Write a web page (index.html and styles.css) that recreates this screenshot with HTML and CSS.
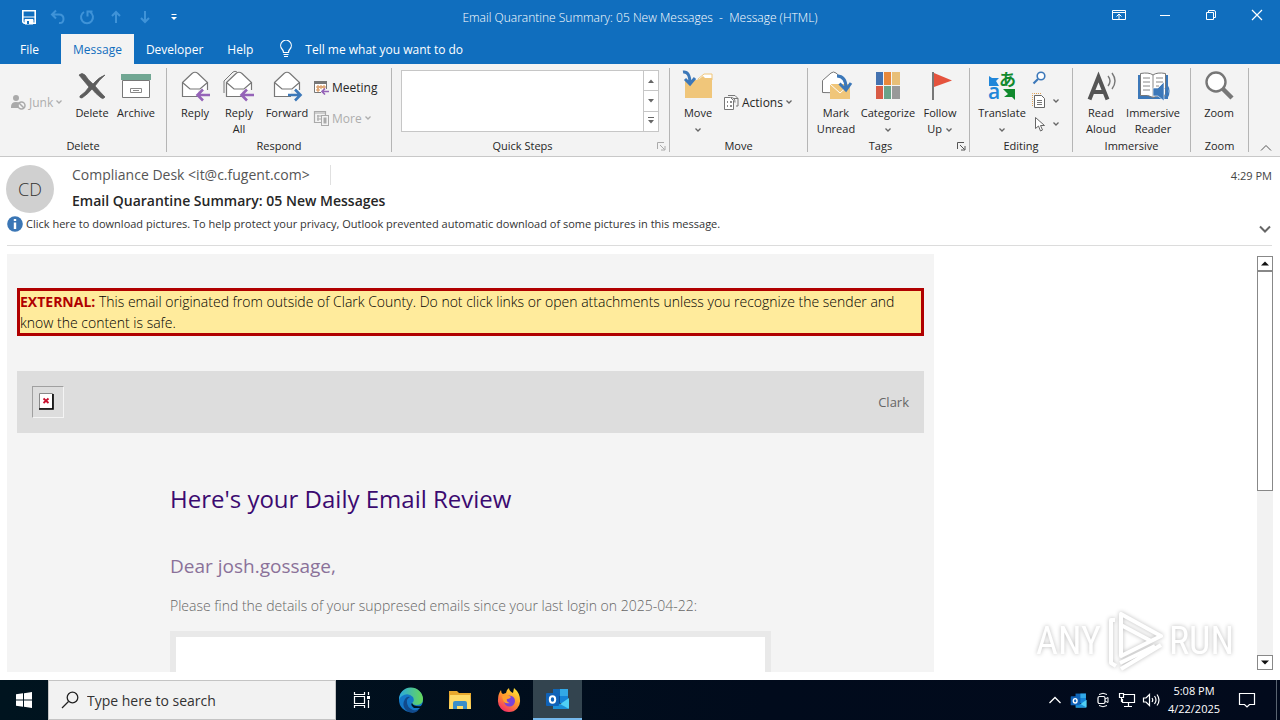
FILE: index.html
```html
<!DOCTYPE html>
<html lang="en">
<head>
  <meta charset="UTF-8" />
  <meta name="viewport" content="width=device-width, initial-scale=1.0" />
  <title>Email Quarantine Summary: 05 New Messages - Message (HTML)</title>
  <link rel="stylesheet" href="styles.css">
</head>
<body>
  <svg class="sprite" aria-hidden="true">
    <symbol id="caret" viewBox="0 0 8 6"><path d="M1.500 1.500L4 4l2.500-2.500" fill="none" stroke="currentColor" stroke-width="1.300"/></symbol>
    <symbol id="envelope" viewBox="0 0 32 32">
      <path d="M3.500 12.500L13 3.500q3-2.500 6 0l9.500 9v14h-25z" fill="#fff" stroke="#777" stroke-width="1.200"/>
      <path d="M3.500 12.500L11 19h10l7.500-6.500" fill="none" stroke="#777" stroke-width="1.200"/>
    </symbol>
    <symbol id="back-arrow" viewBox="0 0 16 14"><path d="M15.500 7H3M8.500 1.500L3 7l5.500 5.500" fill="none" stroke="currentColor" stroke-width="2.600"/></symbol>
    <symbol id="launcher" viewBox="0 0 9 9"><path d="M.5 7V.5H7M3 3l4.500 4.500M8 4v4H4" fill="none" stroke="currentColor"/></symbol>
    <symbol id="outlook" viewBox="0 0 26 24">
      <path d="M8 2h15v14H8z" fill="#1066b5"/>
      <path d="M15 2h8v7h-8z" fill="#32a9e7"/><path d="M8 9h7v7H8z" fill="#0a4c94"/><path d="M15 9h8v7h-8z" fill="#1483d8"/>
      <path d="M8 22l16-11v10q0 1-1 1z" fill="#50d0f5"/><path d="M8 13l16 9H8z" fill="#1b90d8"/>
      <rect x="1" y="6" width="13" height="13" rx="1" fill="#0f62b8"/>
      <ellipse cx="7.500" cy="12.500" rx="2.700" ry="3.200" fill="none" stroke="#fff" stroke-width="2"/>
    </symbol>
  </svg>

  <header class="titlebar">
    <div class="quick-access">
      <button aria-label="Save"><svg width="16" height="16" viewBox="0 0 16 16"><path d="M1.800 1.800h12.400v12.400H3.200l-1.400-1.400z" fill="none" stroke="#fff" stroke-width="1.600"/><path d="M2 8h12M4 10.500h8V15H4z" fill="#fff" stroke="#fff"/><path d="M6 12h2v3H6z" fill="#106ebe"/></svg></button>
      <button class="faded" aria-label="Undo"><svg width="16" height="16" viewBox="0 0 16 16"><path d="M6 1.500L2 5.500l4 4M2 5.500h7q4.500 0 4.500 4.500T9 14" fill="none" stroke="currentColor" stroke-width="2"/></svg></button>
      <button class="faded" aria-label="Redo"><svg width="16" height="16" viewBox="0 0 16 16"><path d="M5 3a6 6 0 1 0 6 0M8.500 7.500V2.500h5" fill="none" stroke="currentColor" stroke-width="2"/></svg></button>
      <button class="faded" aria-label="Previous item"><svg width="16" height="16" viewBox="0 0 16 16"><path d="M8 14V3M4 7l4-4 4 4" fill="none" stroke="currentColor" stroke-width="2"/></svg></button>
      <button class="faded" aria-label="Next item"><svg width="16" height="16" viewBox="0 0 16 16"><path d="M8 2v11M4 9l4 4 4-4" fill="none" stroke="currentColor" stroke-width="2"/></svg></button>
      <button aria-label="Customize"><svg width="16" height="16" viewBox="0 0 16 16"><path d="M5.500 5.500h5" stroke="#fff"/><path d="M5 8h6l-3 3z" fill="#fff"/></svg></button>
    </div>
    <div class="window-title">Email Quarantine Summary: 05 New Messages&nbsp; -&nbsp; Message (HTML)</div>
    <div class="window-buttons">
      <button aria-label="Ribbon display options"><svg width="14" height="12" viewBox="0 0 14 12"><path d="M.5 1.500h13v9H.5zM.5 3.500h13M7 10V5M4.500 7.500L7 5l2.500 2.500" fill="none" stroke="#fff"/></svg></button>
      <button aria-label="Minimize"><svg width="12" height="12" viewBox="0 0 12 12"><path d="M1 6.500h10" stroke="#fff"/></svg></button>
      <button aria-label="Restore"><svg width="12" height="12" viewBox="0 0 12 12"><path d="M1.500 3.500h7v7h-7zM3.500 3V1.500H9q1.500 0 1.500 1.500v5.500H9" fill="none" stroke="#fff"/></svg></button>
      <button aria-label="Close"><svg width="12" height="12" viewBox="0 0 12 12"><path d="M1 1l10 10M11 1L1 11" stroke="#fff" stroke-width="1.200"/></svg></button>
    </div>
  </header>

  <nav class="tabs">
    <button class="tab">File</button>
    <button class="tab active">Message</button>
    <button class="tab">Developer</button>
    <button class="tab">Help</button>
    <button class="tell-me"><svg width="14" height="18" viewBox="0 0 14 18"><path d="M4.500 12.500q0-2-1.500-3.500a5.300 5.300 0 1 1 8 0q-1.500 1.500-1.500 3.500zM4.500 14.500h5M5 16.500h4" fill="none" stroke="#fff" stroke-width="1.200"/></svg>Tell me what you want to do</button>
  </nav>

  <section class="ribbon">
    <div class="group">
      <div class="group-main">
        <div class="stack junk">
          <button class="small disabled"><svg width="17" height="16" viewBox="0 0 17 16"><circle cx="6" cy="4" r="3" fill="#aaa"/><path d="M1 13q0-5 5-5 3 0 4 1l-2 5H1z" fill="#aaa"/><circle cx="11.500" cy="11.500" r="3.500" fill="#f3f3f3" stroke="#aaa" stroke-width="1.500"/><path d="M9 9l5 5" stroke="#aaa" stroke-width="1.500"/></svg>Junk<svg class="caret"><use href="#caret"/></svg></button>
        </div>
        <button class="big"><svg class="icon" viewBox="0 0 32 32"><path d="M3 5q3-3 6 0 3 5 8 9 6-7 12-9-6 5-10 11 5 6 10 11-2 3-5 0-5-4-8-8-4 5-10 9-3 0-2-2 6-4 9-9-5-6-10-12z" fill="#5d5d5d" stroke="#5d5d5d" stroke-width=".8"/></svg><span>Delete</span></button>
        <button class="big"><svg class="icon" viewBox="0 0 32 32"><path d="M1 4h30v6H1z" fill="#71a793"/><path d="M2.500 10.500h27v17h-27z" fill="#fff" stroke="#777"/><path d="M10.500 18.500h11v4h-11zM13 20.500h6" fill="none" stroke="#888"/></svg><span>Archive</span></button>
      </div>
      <div class="group-name">Delete</div>
    </div>

    <div class="group">
      <div class="group-main">
        <button class="big"><svg class="icon" viewBox="0 0 32 32"><use href="#envelope"/><path d="M19 20h12v10H19z" fill="#f3f3f3"/><svg x="15" y="18" width="17" height="14" color="#9563b8"><use href="#back-arrow"/></svg></svg><span>Reply</span></button>
        <button class="big"><svg class="icon" viewBox="0 0 32 32"><path d="M1 23V11L10 2q2-1.500 4 0" fill="none" stroke="#777"/><use href="#envelope"/><path d="M19 20h12v10H19z" fill="#f3f3f3"/><svg x="15" y="18" width="17" height="14" color="#9563b8"><use href="#back-arrow"/></svg></svg><span>Reply<br>All</span></button>
        <button class="big mid"><svg class="icon" viewBox="0 0 32 32"><use href="#envelope"/><path d="M20 20h11v10H20z" fill="#f3f3f3"/><path d="M17 25h12M24 19.500l5.500 5.500-5.500 5.500" fill="none" stroke="#3c78b9" stroke-width="2.600"/></svg><span>Forward</span></button>
        <div class="stack respond-more">
          <button class="small"><svg width="17" height="16" viewBox="0 0 17 16"><path d="M1.500 2.500h12v11h-12z" fill="#fff" stroke="#777"/><path d="M1 2h13v3H1z" fill="#777"/><path d="M4 7h2v2H4zM7 7h2v2H7zM10 7h2v2h-2zM4 10h2v2H4z" fill="#fff" stroke="#d58a4a"/><path d="M8 10h7v5H8z" fill="#f3f3f3"/><path d="M16 12.500H9M12 9.500l-3 3 3 3" fill="none" stroke="#9563b8" stroke-width="1.600"/></svg>Meeting</button>
          <button class="small disabled"><svg width="17" height="16" viewBox="0 0 17 16"><path d="M1.500 1.500h11v11h-11zM1 3h12M4 6h6M4 9h5M5 5v6" fill="none" stroke="#aaa" stroke-width="1.200"/><rect x="8.500" y="5.500" width="7" height="10" fill="#f3f3f3" stroke="#aaa"/><path d="M10.500 7.500h3v6h-3z" fill="#aaa"/></svg>More<svg class="caret"><use href="#caret"/></svg></button>
        </div>
      </div>
      <div class="group-name">Respond</div>
    </div>

    <div class="group">
      <div class="group-main quick-steps">
        <div class="steps-list"></div>
        <div class="steps-scroll">
          <button aria-label="Row up"><svg width="8" height="6" viewBox="0 0 8 6"><path d="M1 5l3-3.500L7 5z" fill="#666"/></svg></button>
          <button aria-label="Row down"><svg width="8" height="6" viewBox="0 0 8 6"><path d="M1 1l3 3.500L7 1z" fill="#666"/></svg></button>
          <button aria-label="More steps"><svg width="8" height="8" viewBox="0 0 8 8"><path d="M1 .5h6" stroke="#666"/><path d="M1 3l3 3.500L7 3z" fill="#666"/></svg></button>
        </div>
      </div>
      <div class="group-name with-launcher">Quick Steps<button class="launcher faint" aria-label="Manage quick steps"><svg width="9" height="9"><use href="#launcher"/></svg></button></div>
    </div>

    <div class="group">
      <div class="group-main">
        <button class="big"><svg class="icon" viewBox="0 0 32 32"><path d="M16 9l6-5h8v6H16z" fill="#fff" stroke="#f0c67a"/><path d="M3 10h13l5-4 2 2h7v20H3z" fill="#f0c67a"/><path d="M1 2q7-1 7 12M3 9l5 5 5-6" fill="none" stroke="#3c78b9" stroke-width="3"/></svg><span>Move<br><svg class="caret"><use href="#caret"/></svg></span></button>
        <div class="stack one">
          <button class="small"><svg width="17" height="16" viewBox="0 0 17 16"><path d="M1.500 3.500h6l3 3v9h-9z" fill="#fff" stroke="#777"/><path d="M4 8h1M7 8h2M4 12h1M7 12h2" stroke="#666" stroke-width="1.600"/><path d="M5 1.500h7l3 3V12h-2M11 4.500h4M8 3.500q4 0 4 5" fill="none" stroke="#777"/></svg>Actions<svg class="caret"><use href="#caret"/></svg></button>
        </div>
      </div>
      <div class="group-name">Move</div>
    </div>

    <div class="group">
      <div class="group-main">
        <button class="big"><svg class="icon" viewBox="0 0 32 32"><path d="M2.500 22.500v-12L11 3q2.500-2 5 0l9 8v12z" fill="#fff" stroke="#777"/><path d="M10 14h20v15H10z" fill="#f0c67a"/><path d="M10 14l10 9 10-9" fill="none" stroke="#fff"/><path d="M17 6q9 0 9 12M19.500 13.500L26 20l5-7" fill="none" stroke="#3c78b9" stroke-width="3"/></svg><span>Mark<br>Unread</span></button>
        <button class="big wide"><svg class="icon" viewBox="0 0 32 32"><path d="M4 2h7v13H4z" fill="#4472b0"/><path d="M12 2h7v13h-7z" fill="#e8883a"/><path d="M20 2h8v13h-8z" fill="#e8bf78"/><path d="M4 16h7v13H4z" fill="#d85b45"/><path d="M12 16h7v13h-7z" fill="#6aa389"/><path d="M20 16h8v13h-8z" fill="#999"/></svg><span>Categorize<br><svg class="caret"><use href="#caret"/></svg></span></button>
        <button class="big"><svg class="icon" viewBox="0 0 32 32"><path d="M9 2v28" stroke="#777" stroke-width="2"/><path d="M10 3l18 7.500L10 17z" fill="#e5533d"/></svg><span>Follow<br>Up <svg class="caret"><use href="#caret"/></svg></span></button>
      </div>
      <div class="group-name with-launcher">Tags<button class="launcher" aria-label="Tag options"><svg width="9" height="9"><use href="#launcher"/></svg></button></div>
    </div>

    <div class="group">
      <div class="group-main">
        <button class="big mid"><svg class="icon" viewBox="0 0 32 32"><path d="M3 6l3 2h7l-3 3 3 5H3z" fill="#2086d9"/><path d="M17 19h12v11l-3-3h-8l4-3z" fill="#128a2e"/><text class="glyph-a" x="2" y="29">a</text><text class="glyph-ja" x="13" y="16">あ</text></svg><span>Translate<br><svg class="caret"><use href="#caret"/></svg></span></button>
        <div class="stack editing">
          <button class="small" aria-label="Find"><svg width="14" height="16" viewBox="0 0 14 16"><circle cx="9" cy="6" r="3.800" fill="#fff" stroke="#3c78b9" stroke-width="1.600"/><path d="M6 9l-4.500 4.500" stroke="#3c78b9" stroke-width="2.200"/></svg></button>
          <button class="small" aria-label="Related"><svg width="14" height="16" viewBox="0 0 14 16"><path d="M.5 13V.5H9" fill="none" stroke="#e0a050" stroke-dasharray="1 1"/><path d="M2.500 2.500h7l3 3v9h-10z" fill="#fff" stroke="#666"/><path d="M5 7.500h5M5 9.500h5M5 11.500h5" stroke="#777"/></svg><svg class="caret"><use href="#caret"/></svg></button>
          <button class="small" aria-label="Select"><svg width="14" height="16" viewBox="0 0 14 16"><path d="M3.500 1.500v11l3-2.500 2 5 2-1-2-4.500h4z" fill="#fff" stroke="#666"/></svg><svg class="caret"><use href="#caret"/></svg></button>
        </div>
      </div>
      <div class="group-name">Editing</div>
    </div>

    <div class="group">
      <div class="group-main">
        <button class="big"><svg class="icon" viewBox="0 0 32 32"><path d="M4.500 29.500L13.500 7l9 22.500M8 22h11" fill="none" stroke="#555" stroke-width="4"/><path d="M23 6q4 5 0 10M27 3q6 8 0 16" fill="none" stroke="#777" stroke-width="1.400"/></svg><span>Read<br>Aloud</span></button>
        <button class="big wide"><svg class="icon" viewBox="0 0 32 32"><path d="M1 5h30v24H1z" fill="#3c78b9"/><path d="M3.500 3.500Q12 2 16 5q4-3 12.500-1.500v22q-8-1-12.500 2-4.500-3-12.500-2z" fill="#fff" stroke="#777"/><path d="M16 5v22M6 8h7M6 12h7M6 16h7M6 20h7M19 8h7M19 12h7M19 16h3" stroke="#888"/><path d="M16 18h5l6-6v19l-6-5h-5z" fill="#3c78b9" stroke="#fff" stroke-width=".6"/><path d="M28 18q2.500 3.500 0 7M30 15q4 6 0 13" fill="none" stroke="#3c78b9" stroke-width="1.200"/></svg><span>Immersive<br>Reader</span></button>
      </div>
      <div class="group-name">Immersive</div>
    </div>

    <div class="group">
      <div class="group-main">
        <button class="big"><svg class="icon" viewBox="0 0 32 32"><circle cx="13" cy="12" r="9.500" fill="#fff" stroke="#777" stroke-width="2.400"/><path d="M20 19l9 9" stroke="#777" stroke-width="4.500"/></svg><span>Zoom</span></button>
      </div>
      <div class="group-name">Zoom</div>
    </div>

    <button class="collapse" aria-label="Collapse the ribbon"><svg width="12" height="8" viewBox="0 0 12 8"><path d="M1 6.500l5-5 5 5" fill="none" stroke="#555"/></svg></button>
  </section>

  <section class="message-head">
    <div class="sender-row">
      <div class="avatar">CD</div>
      <div class="sender-info">
        <div class="sender">Compliance Desk &lt;it@c.fugent.com&gt;</div>
        <h1 class="subject">Email Quarantine Summary: 05 New Messages</h1>
      </div>
      <time class="received">4:29 PM</time>
    </div>
    <div class="info-row">
      <svg width="16" height="16" viewBox="0 0 16 16"><circle cx="8" cy="8" r="7.800" fill="#3b76b5"/><path d="M8 6.500V13M8 3v2" stroke="#fff" stroke-width="2.400"/></svg>
      <button class="info-text">Click here to download pictures. To help protect your privacy, Outlook prevented automatic download of some pictures in this message.</button>
      <button class="expand" aria-label="Expand header"><svg width="12" height="8" viewBox="0 0 12 8"><path d="M1 1.500l5 5 5-5" fill="none" stroke="#666" stroke-width="2"/></svg></button>
    </div>
  </section>

  <main class="reading">
    <article class="mail">
      <p class="external"><strong>EXTERNAL:</strong> This email originated from outside of Clark County. Do not click links or open attachments unless you recognize the sender and know the content is safe.</p>
      <div class="brand-bar">
        <div class="missing-image"><svg width="15" height="17" viewBox="0 0 15 17"><path d="M.5.5h13v15H.5z" fill="#fff" stroke="#888"/><path d="M0 16h14V1" fill="none" stroke="#000" stroke-width="1.600"/><path d="M4.500 5.500l5 4.500M9.500 5.500l-5 4.500" stroke="#c8102e" stroke-width="1.800"/></svg></div>
        <span>Clark</span>
      </div>
      <div class="content">
        <h2>Here's your Daily Email Review</h2>
        <h3>Dear josh.gossage,</h3>
        <p>Please find the details of your suppresed emails since your last login on 2025-04-22:</p>
        <div class="details"></div>
      </div>
    </article>
    <div class="scrollbar">
      <button aria-label="Scroll up"><svg width="8" height="5" viewBox="0 0 8 5"><path d="M0 4.500L4 .5l4 4z" fill="#111"/></svg></button>
      <div class="thumb"></div>
      <div class="track"></div>
      <button aria-label="Scroll down"><svg width="8" height="5" viewBox="0 0 8 5"><path d="M0 .5l4 4 4-4z" fill="#111"/></svg></button>
    </div>
    <div class="watermark">
      <span>ANY</span>
      <svg width="60" height="62" viewBox="0 0 60 62"><g fill="none" stroke="#fff" stroke-width="4" stroke-linejoin="round"><path d="M16 4v42l40-20zM16 15l30 16"/><path d="M10 10H6v43l5 3M15 53l35-17M16 59l40-24"/></g></svg>
      <span>RUN</span>
    </div>
  </main>

  <footer class="taskbar">
    <button class="start" aria-label="Start"><svg width="16" height="16" viewBox="0 0 16 16"><path d="M0 2.300l7-1v6.200H0zM8 1.200L16 0v7.500H8zM0 8.500h7v6.200l-7-1zM8 8.500h8V16l-8-1.200z" fill="#fff"/></svg></button>
    <label class="search">
      <svg width="18" height="18" viewBox="0 0 18 18"><circle cx="11.500" cy="6.500" r="5.300" fill="none" stroke="#222" stroke-width="1.300"/><path d="M7.500 10.500L1 17" stroke="#222" stroke-width="1.300"/></svg>
      <input type="text" placeholder="Type here to search" aria-label="Type here to search" />
    </label>
    <div class="apps">
      <button aria-label="Task view"><svg width="18" height="18" viewBox="0 0 18 18"><path d="M1.500 1v2.500h10V1M1.500 17v-2.500h10V17M1.500 5.500h10v7h-10zM15.500 1v3M15.500 9v8" fill="none" stroke="#fff" stroke-width="1.200"/><path d="M14 5h3v3h-3z" fill="#fff"/></svg></button>
      <button aria-label="Microsoft Edge"><svg width="26" height="26" viewBox="0 0 26 26">
        <defs><linearGradient id="edge-top" x1="0" x2="1"><stop offset="0" stop-color="#2aa8e0"/><stop offset="1" stop-color="#66d857"/></linearGradient></defs>
        <circle cx="13" cy="13" r="12" fill="#1478c8"/>
        <path d="M1 13A12 12 0 0 1 25 12q0 6-7 6-3 0-4-2 3-2 1-6-5-5-11-1-2 1-3 4z" fill="url(#edge-top)"/>
        <path d="M9 13q-1 7 6 10 5 1 7-2-5 8-13 3-6-5-2-12 2-3 5-2-2 1-3 3z" fill="#114a8c"/>
        <path d="M14 16q2 4 9 3l2-3-1 5-8 0q-4-3-2-5z" fill="#00131f"/></svg></button>
      <button aria-label="File Explorer"><svg width="24" height="22" viewBox="0 0 24 22"><path d="M1 2h8l2 2h12v16H1z" fill="#e8a92e"/><path d="M2 6h20l1 14H1z" fill="#ffdb68"/><path d="M5 20v-6q0-2 2-2h10q2 0 2 2v6h-4v-3H9v3z" fill="#3b8ec9"/></svg></button>
      <button aria-label="Firefox"><svg width="24" height="26" viewBox="0 0 24 26">
        <defs><linearGradient id="fox" x1=".8" y1="0" x2=".2" y2="1"><stop offset="0" stop-color="#ffe838"/><stop offset=".45" stop-color="#ff9a2b"/><stop offset="1" stop-color="#f4236b"/></linearGradient></defs>
        <path d="M12 25A11 11 0 0 1 1 13Q1 7 4 3q0 3 2 4l3-1q0-3 3-5 0 3 4 5l1-5q6 5 6 12a11 11 0 0 1-11 12z" fill="url(#fox)"/>
        <circle cx="12.500" cy="14" r="5.500" fill="#7a43d8"/><path d="M5 9q5-2 9 1-1 2-4 2-1 3 3 4-7 2-8-7z" fill="#ffa02e"/></svg></button>
      <button class="running" aria-label="Outlook"><svg width="26" height="24"><use href="#outlook"/></svg></button>
    </div>
    <div class="tray">
      <button aria-label="Show hidden icons"><svg width="14" height="10" viewBox="0 0 14 10"><path d="M1.500 8L7 2.500 12.500 8" fill="none" stroke="#fff" stroke-width="1.300"/></svg></button>
      <button aria-label="Outlook tray icon"><svg width="18" height="17"><use href="#outlook"/></svg></button>
      <button aria-label="Meet now"><svg width="14" height="16" viewBox="0 0 14 16"><path d="M3 2.500q4-2.500 8 0M3 13.500q4 2.500 8 0" fill="none" stroke="#fff"/><rect x="2" y="4.500" width="7" height="7" rx="1.500" fill="none" stroke="#fff" stroke-width="1.200"/><path d="M9 7l3-1.500v5L9 9" fill="none" stroke="#fff"/></svg></button>
      <button aria-label="Network"><svg width="18" height="16" viewBox="0 0 18 16"><path d="M6 2.500h10.500v8H4.500V7M10.500 11v3M6 14.500h8M1.500 1.500h4v4h-4zM3.500 6v4" fill="none" stroke="#fff" stroke-width="1.200"/></svg></button>
      <button aria-label="Volume"><svg width="18" height="16" viewBox="0 0 18 16"><path d="M1.500 6v4H4l3.500 3.500v-11L4 6zM10 6q1.500 2 0 4M12.500 4q3 4 0 8M15 2.500q4 5.500 0 11" fill="none" stroke="#fff" stroke-width="1.200"/></svg></button>
      <div class="clock"><span>5:08 PM</span><span>4/22/2025</span></div>
      <button class="notify" aria-label="Notifications"><svg width="18" height="17" viewBox="0 0 18 17"><path d="M1.500 1.500h15v11h-5L9 15l-2.500-2.500h-5z" fill="none" stroke="#fff" stroke-width="1.200"/></svg></button>
    </div>
  </footer>
</body>
</html>
```

FILE: styles.css
```css
* {
  box-sizing: border-box;
  margin: 0;
  padding: 0;
}

body {
  height: 100vh;
  display: flex;
  flex-direction: column;
  overflow: hidden;
  background: #fff;
  color: #262626;
  font-family: "Open Sans", "Noto Sans", sans-serif;
  font-size: 11px;
}

button {
  background: none;
  border: none;
  color: inherit;
  font: inherit;
}

svg {
  flex-shrink: 0;
}

.sprite {
  display: none;
}

/* title bar */
.titlebar {
  display: grid;
  grid-template-columns: 1fr auto 1fr;
  align-items: center;
  height: 34px;
  background: #106ebe;
  color: #fff;
}

.quick-access {
  display: flex;
  padding-left: 14px;
}

.quick-access button {
  width: 29px;
  height: 16px;
}

.quick-access .faded {
  color: #3f93d8;
}

.window-title {
  font-size: 12px;
  font-weight: 300;
}

.window-buttons {
  display: flex;
  align-self: start;
  justify-content: flex-end;
}

.window-buttons button {
  display: flex;
  align-items: center;
  justify-content: center;
  width: 46px;
  height: 30px;
}

/* tabs */
.tabs {
  display: flex;
  height: 30px;
  padding-left: 8px;
  background: #106ebe;
  color: #fff;
  font-size: 12px;
}

.tab {
  padding: 0 12px;
}

.tab:first-child {
  margin-right: 10px;
}

.tab.active {
  background: #f3f3f3;
  color: #106ebe;
}

.tell-me {
  display: flex;
  align-items: center;
  gap: 12px;
  padding-left: 14px;
}

/* ribbon */
.ribbon {
  display: grid;
  grid-template-columns: 167px 225px 278px 138px 162px 103px 118px 58px 1fr;
  height: 93px;
  padding: 4px 0;
  background: #f3f3f3;
  border-bottom: 1px solid #c8c8c8;
}

.group {
  display: flex;
  flex-direction: column;
  border-right: 1px solid #b5b5b5;
}

.group-main {
  flex: 1;
  display: flex;
  padding: 2px 6px 0;
}

.group-name {
  position: relative;
  line-height: 12px;
  text-align: center;
}

.group-name.with-launcher {
  padding-right: 16px;
}

.launcher {
  position: absolute;
  right: 3px;
  top: 2px;
  height: 9px;
  line-height: 0;
  color: #555;
}

.launcher.faint {
  color: #aaa;
}

.big {
  display: flex;
  flex-direction: column;
  align-items: center;
  width: 44px;
  line-height: 16px;
  white-space: nowrap;
}

.big.mid {
  width: 52px;
}

.big.wide {
  width: 60px;
}

.icon {
  width: 32px;
  height: 32px;
  margin-bottom: 3px;
  overflow: visible;
}

.caret {
  width: 8px;
  height: 6px;
  color: #666;
}

.glyph-a {
  fill: #2086d9;
  font-size: 21px;
  font-weight: 600;
}

.glyph-ja {
  fill: #128a2e;
  font-family: "Noto Sans CJK JP", sans-serif;
  font-size: 17px;
  font-weight: 700;
}

.stack {
  display: flex;
  flex-direction: column;
}

.stack.junk {
  width: 64px;
  padding: 22px 0 0 4px;
}

.stack.one {
  padding: 22px 0 0 3px;
}

.stack.respond-more {
  gap: 11px;
  padding-top: 7px;
}

.stack.editing {
  gap: 7px;
  padding-left: 4px;
}

.stack.editing .small {
  height: 16px;
  gap: 6px;
}

.small {
  display: flex;
  align-items: center;
  gap: 2px;
  height: 20px;
  font-size: 12px;
  white-space: nowrap;
}

.small.disabled,
.small.disabled .caret {
  color: #adadad;
}

.quick-steps {
  padding: 2px 10px 8px 9px;
}

.steps-list {
  flex: 1;
  background: #fff;
  border: 1px solid #c6c6c6;
}

.steps-scroll {
  display: flex;
  flex-direction: column;
  width: 15px;
  border: 1px solid #c6c6c6;
  border-left: none;
  background: #fff;
}

.steps-scroll button {
  flex: 1;
  line-height: 0;
}

.steps-scroll button + button {
  border-top: 1px solid #c6c6c6;
}

.collapse {
  align-self: end;
  justify-self: end;
  margin-right: 8px;
  line-height: 0;
}

/* message header */
.message-head {
  padding: 8px 8px 0 6px;
}

.sender-row {
  display: flex;
  height: 47px;
}

.avatar {
  width: 48px;
  height: 48px;
  border-radius: 50%;
  background: #d0d0d0;
  color: #333;
  font-size: 18px;
  font-weight: 300;
  line-height: 48px;
  text-align: center;
}

.sender-info {
  flex: 1;
  padding-left: 18px;
}

.sender {
  width: fit-content;
  padding-right: 20px;
  border-right: 1px solid #e0e0e0;
  color: #555;
  font-size: 14px;
  line-height: 20px;
}

.subject {
  padding-top: 6px;
  font-size: 14px;
  font-weight: 600;
  line-height: 20px;
}

.received {
  padding-top: 3px;
  color: #444;
  line-height: 16px;
}

.info-row {
  display: flex;
  gap: 3px;
  height: 34px;
  margin-left: 1px;
  padding-top: 4px;
  border-bottom: 1px solid #dcdcdc;
}

.info-text {
  height: 16px;
  color: #333;
  line-height: 16px;
}

.expand {
  align-self: flex-end;
  margin: 0 1px 12px auto;
  line-height: 0;
}

/* mail */
.reading {
  position: relative;
  flex: 1;
  min-height: 0;
  display: flex;
  justify-content: space-between;
  padding: 8px 7px;
}

.mail {
  flex: 0 1 927px;
  overflow: hidden;
  padding: 34px 10px 0;
  background: #f4f4f4;
  color: #000;
}

.external {
  border: 3px solid #b00000;
  background: #ffeb9c;
  font-size: 14px;
  font-weight: 300;
  line-height: 21px;
}

.external strong {
  color: #b00000;
  font-weight: 700;
}

.brand-bar {
  display: flex;
  align-items: center;
  justify-content: space-between;
  height: 62px;
  margin-top: 35px;
  padding: 0 15px;
  background: #ddd;
  color: #666;
  font-size: 13px;
}

.missing-image {
  width: 32px;
  height: 32px;
  padding: 6px;
  border: 1px solid;
  border-color: #a0a0a0 #f4f4f4 #f4f4f4 #a0a0a0;
  line-height: 0;
}

.content {
  max-width: 601px;
  margin: 49px auto 0;
}

.content h2 {
  color: #3b0a70;
  font-size: 24px;
  font-weight: 400;
  line-height: 34px;
}

.content h3 {
  margin-top: 36px;
  color: #8a7199;
  font-size: 19px;
  font-weight: 400;
  line-height: 28px;
}

.content p {
  margin: 16px 0 15px;
  color: #666;
  font-size: 14px;
  font-weight: 300;
  line-height: 20px;
}

.details {
  height: 200px;
  border: 6px solid #e9e9e9;
  background: #fff;
}

.scrollbar {
  display: flex;
  flex-direction: column;
  width: 16px;
  padding: 2px 0;
}

.scrollbar button {
  height: 15px;
  border: 1px solid #888;
  background: #fff;
  line-height: 0;
}

.scrollbar button svg {
  vertical-align: middle;
}

.thumb {
  flex: 0 1 220px;
  border: 1px solid #888;
  background: #fff;
}

.track {
  flex: 1;
  background: #f2f2f2;
}

.watermark {
  position: absolute;
  right: 46px;
  bottom: 8px;
  display: flex;
  align-items: center;
  gap: 4px;
  color: #fff;
  filter: drop-shadow(0 0 2px #bbb);
  font-family: "Roboto Condensed", Roboto, sans-serif;
  font-size: 38px;
}

/* taskbar */
.taskbar {
  display: flex;
  height: 40px;
  background: linear-gradient(to right, #00141f, #010b1c 60%, #020a1c);
  color: #fff;
}

.start {
  width: 48px;
  line-height: 0;
}

.search {
  display: flex;
  align-items: center;
  gap: 8px;
  width: 288px;
  padding-left: 12px;
  border: 1px solid #c4c4c4;
  background: #f2f2f2;
}

.search input {
  flex: 1;
  min-width: 0;
  border: none;
  outline: none;
  background: none;
  font-family: inherit;
  font-size: 14px;
}

.search input::placeholder {
  color: #333;
  opacity: 1;
}

.apps {
  display: flex;
  padding-left: 1px;
}

.apps button {
  display: flex;
  align-items: center;
  justify-content: center;
  width: 49px;
}

.apps .running {
  border-bottom: 2px solid #76b9ed;
  background: #33444f;
}

.tray {
  display: flex;
  align-items: center;
  margin: 0 3px 0 auto;
  padding-right: 7px;
  border-right: 1px solid #5a6470;
}

.tray button {
  width: 24px;
  line-height: 0;
}

.tray .notify {
  width: 44px;
}

.clock {
  display: flex;
  flex-direction: column;
  width: 62px;
  line-height: 18px;
  text-align: center;
}
```
